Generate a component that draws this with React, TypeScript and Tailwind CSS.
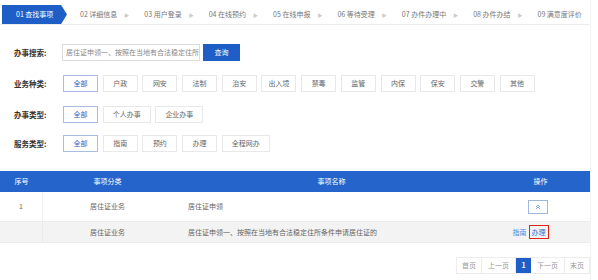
import React from 'react';

const steps = ['02 详细信息', '03 用户登录', '04 在线预约', '05 在线申报', '06 等待受理', '07 办件办理中', '08 办件办结', '09 满意度评价'];

const bizTypes = ['全部', '户政', '网安', '法制', '治安', '出入境', '禁毒', '监管', '内保', '保安', '交警', '其他'];
const applyTypes = ['全部', '个人办事', '企业办事'];
const serviceTypes = ['全部', '指南', '预约', '办理', '全程网办'];

const Chip: React.FC<{ label: string; active?: boolean; wide?: boolean }> = ({ label, active, wide }) => (
  <div
    className={`h-[17px] shrink-0 flex items-center justify-center border text-[7px] ${wide ? 'px-[9px]' : 'w-[35px]'} ${
      active ? 'border-[#a9bde0] text-[#2a62c5]' : 'border-[#e8e8e8] text-[#666]'
    }`}
  >
    {label}
  </div>
);

const FilterRow: React.FC<{ label: string; items: string[]; className?: string }> = ({ label, items, className }) => (
  <div className={`flex items-center ${className ?? ''}`}>
    <div className="w-[63px] pl-[14px] text-[7.5px] font-bold text-[#333] shrink-0 whitespace-nowrap">{label}</div>
    <div className="flex gap-[4.7px]">
      {items.map((it, i) => (
        <Chip key={it + i} label={it} active={i === 0} wide={it.length > 3} />
      ))}
    </div>
  </div>
);

export default function App() {
  return (
    <div
      className="w-[598px] h-[280px] bg-white overflow-hidden"
      style={{ fontFamily: '"Noto Sans CJK SC", "Noto Sans", sans-serif' }}
    >
      <div className="w-[591px] border-r border-[#f2f2f2] h-full">
        {/* step bar */}
        <div className="pt-[5px] pl-[2px] border-b border-[#ececec] flex items-center h-[25px]">
          <div className="shrink-0 h-[19px] w-[65px] bg-[#1e5ec6] text-white text-[7px] flex items-center pl-[14px] [clip-path:polygon(0_0,91%_0,100%_50%,91%_100%,0_100%)]">
            01 查找事项
          </div>
          <div className="flex items-center ml-[13px] text-[7px] text-[#777]">
            {steps.map((s, i) => (
              <div key={s} className="flex items-center shrink-0">
                <span className="whitespace-nowrap">{s}</span>
                {i < steps.length - 1 && <span className="text-[5px] text-[#cccccc] ml-[7px] mr-[15px]">▶</span>}
              </div>
            ))}
          </div>
        </div>

        {/* search */}
        <div className="flex items-center mt-[19px]">
          <div className="w-[62px] pl-[14px] text-[7.5px] font-bold text-[#333] shrink-0">办事搜索:</div>
          <div className="w-[138px] h-[17px] border border-[#dcdcdc] flex items-center pl-[3px] text-[7px] text-[#888] whitespace-nowrap overflow-hidden">
            居住证申领一、按照在当地有合法稳定住所
          </div>
          <div className="ml-[3px] w-[37px] h-[17px] bg-[#1e5ec6] text-white text-[7px] flex items-center justify-center">查询</div>
        </div>

        <FilterRow label="业务种类:" items={bizTypes} className="mt-[14px]" />
        <FilterRow label="办事类型:" items={applyTypes} className="mt-[14px]" />
        <FilterRow label="服务类型:" items={serviceTypes} className="mt-[12px]" />

        {/* table */}
        <div className="mt-[19px] text-[7px]">
          <div className="flex h-[21px] bg-[#2565cb] text-white items-center">
            <div className="w-[43px] text-center">序号</div>
            <div className="w-[129px] text-center">事项分类</div>
            <div className="w-[319px] text-center">事项名称</div>
            <div className="flex-1 text-center">操作</div>
          </div>
          <div className="flex h-[30px] items-center text-[#666] border-b border-[#ececec]">
            <div className="w-[43px] text-center h-full flex items-center justify-center border-r border-[#f0f0f0]">1</div>
            <div className="w-[129px] text-center">居住证业务</div>
            <div className="w-[319px] pl-[16px]">居住证申领</div>
            <div className="flex-1 flex justify-center pr-[6px]">
              <div className="w-[20px] h-[14px] border border-[#9fb7de] flex items-center justify-center text-[#4b7bd0]">
                <svg width="6" height="6" viewBox="0 0 8 8" fill="none" stroke="currentColor" strokeWidth="1">
                  <path d="M1.5 4L4 1.5L6.5 4" />
                  <path d="M1.5 6.5L4 4L6.5 6.5" />
                </svg>
              </div>
            </div>
          </div>
          <div className="flex h-[21px] items-center text-[#666] bg-[#f3f3f3] border-b border-[#ececec]">
            <div className="w-[43px] h-full border-r border-[#ebebeb]" />
            <div className="w-[129px] text-center">居住证业务</div>
            <div className="w-[319px] pl-[16px] whitespace-nowrap">居住证申领一、按照在当地有合法稳定住所条件申请居住证的</div>
            <div className="flex-1 flex justify-center items-center gap-[2px] pr-[20px]">
              <span className="text-[#4a8ad8]">指南</span>
              <span className="border border-[#e0241b] px-[2px] h-[14px] flex items-center text-[#3a6fc9]">办理</span>
            </div>
          </div>
        </div>

        {/* pagination */}
        <div className="flex justify-end mt-[14px] text-[7px] text-[#999]">
          <div className="flex h-[17px] border border-[#ececec]">
            <div className="w-[25px] flex items-center justify-center border-r border-[#ececec]">首页</div>
            <div className="w-[34px] flex items-center justify-center border-r border-[#ececec]">上一页</div>
            <div className="w-[15px] flex items-center justify-center bg-[#1e5ec6] text-white font-bold">1</div>
            <div className="w-[34px] flex items-center justify-center border-r border-[#ececec]">下一页</div>
            <div className="w-[24px] flex items-center justify-center">末页</div>
          </div>
        </div>
      </div>
    </div>
  );
}
